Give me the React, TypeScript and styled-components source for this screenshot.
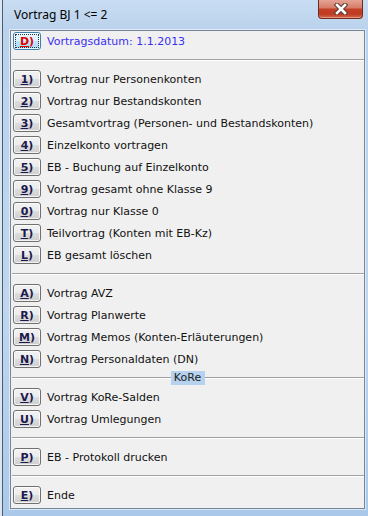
import { createGlobalStyle, styled } from "styled-components";

const GlobalStyle = createGlobalStyle`
  html, body {
    margin: 0;
    padding: 0;
  }
  body {
    width: 368px;
    height: 516px;
    overflow: hidden;
    background: #dbe6f1;
    font-family: "DejaVu Sans", Verdana, sans-serif;
  }
`;

const Window = styled.div`
  box-sizing: border-box;
  width: 366px;
  height: 516px;
  margin-left: 2px;
  padding: 0 3px 7px 7px;
  display: flex;
  flex-direction: column;
  border-left: 1px solid #4a5d73;
  background: linear-gradient(
    to bottom,
    #c9ddf2 0px,
    #bad2ec 30px,
    #bfd6ee 60%,
    #aac9ea 100%
  );
`;

const TitleBar = styled.div`
  height: 30px;
  display: flex;
  justify-content: space-between;
  align-items: flex-start;
`;

const Title = styled.div`
  margin-left: 4px;
  line-height: 30px;
  font-family: "Noto Sans", "Open Sans", sans-serif;
  font-size: 12px;
  color: #000;
`;

const CloseButton = styled.div`
  box-sizing: border-box;
  width: 45px;
  height: 19px;
  margin-right: 2px;
  display: flex;
  align-items: center;
  justify-content: center;
  border: 1px solid #6b2d20;
  border-top: none;
  border-radius: 0 0 4px 4px;
  background: linear-gradient(
    to bottom,
    #e5a393 0%,
    #d67f6b 42%,
    #c43f26 52%,
    #bf3b20 78%,
    #d46a4e 100%
  );
  box-shadow: inset 0 -1px 0 rgba(255, 200, 180, 0.5);
`;

const Client = styled.div`
  flex: 1;
  display: flex;
  flex-direction: column;
  padding: 1px 0 4px 2px;
  background: #f0f0f0;
  border: 1px solid #76869a;
  box-shadow: 0 0 0 1px rgba(255, 255, 255, 0.55);
`;

const Group = styled.div`
  display: flex;
  flex-direction: column;
  gap: 4px;
`;

const Row = styled.div`
  height: 18px;
  display: flex;
  align-items: center;
  gap: 6px;
`;

const KeyButton = styled.div<{ $focus?: boolean }>`
  position: relative;
  box-sizing: border-box;
  width: 28px;
  height: 18px;
  flex: none;
  display: flex;
  align-items: center;
  justify-content: center;
  border: 1px solid ${({ $focus }) => ($focus ? "#3c7fb1" : "#707070")};
  border-radius: 3px;
  background: ${({ $focus }) =>
    $focus
      ? "linear-gradient(to bottom, #eaf6fd 0%, #d9f0fc 50%, #bee6fd 51%, #a7d9f5 100%)"
      : "linear-gradient(to bottom, #f2f2f2 0%, #ebebeb 50%, #dddddd 51%, #cfcfcf 100%)"};
  box-shadow: inset 0 0 0 1px rgba(255, 255, 255, 0.75);
  font-size: 11px;
  font-weight: bold;
  color: ${({ $focus }) => ($focus ? "#e00000" : "#1a1a4e")};

  &::after {
    content: "";
    display: ${({ $focus }) => ($focus ? "block" : "none")};
    position: absolute;
    inset: 1px;
    border: 1px dotted #333;
    border-radius: 1px;
  }
`;

const Hotkey = styled.span`
  text-decoration: underline;
  text-underline-offset: 1px;
`;

const Label = styled.span<{ $accent?: boolean }>`
  font-size: 11px;
  white-space: nowrap;
  color: ${({ $accent }) => ($accent ? "#3a2ff0" : "#111")};
`;

const Separator = styled.div`
  height: 20px;
  margin-left: -1px;
  display: flex;
  align-items: center;
`;

const Line = styled.div`
  flex: 1;
  height: 0;
  border-top: 1px solid #a0a0a0;
  border-bottom: 1px solid #ffffff;
`;

const SectionTitle = styled.span`
  height: 14px;
  padding: 0 4px 0 3px;
  line-height: 14px;
  font-size: 11px;
  color: #222;
  background: #b7d2ee;
`;

type Item = { key: string; text: string; focus?: boolean };
type Section = { title?: string; items: Item[] };

const sections: Section[] = [
  { items: [{ key: "D", text: "Vortragsdatum: 1.1.2013", focus: true }] },
  {
    items: [
      { key: "1", text: "Vortrag nur Personenkonten" },
      { key: "2", text: "Vortrag nur Bestandskonten" },
      { key: "3", text: "Gesamtvortrag (Personen- und Bestandskonten)" },
      { key: "4", text: "Einzelkonto vortragen" },
      { key: "5", text: "EB - Buchung auf Einzelkonto" },
      { key: "9", text: "Vortrag gesamt ohne Klasse 9" },
      { key: "0", text: "Vortrag nur Klasse 0" },
      { key: "T", text: "Teilvortrag (Konten mit EB-Kz)" },
      { key: "L", text: "EB gesamt löschen" },
    ],
  },
  {
    items: [
      { key: "A", text: "Vortrag AVZ" },
      { key: "R", text: "Vortrag Planwerte" },
      { key: "M", text: "Vortrag Memos (Konten-Erläuterungen)" },
      { key: "N", text: "Vortrag Personaldaten (DN)" },
    ],
  },
  {
    title: "KoRe",
    items: [
      { key: "V", text: "Vortrag KoRe-Salden" },
      { key: "U", text: "Vortrag Umlegungen" },
    ],
  },
  { items: [{ key: "P", text: "EB - Protokoll drucken" }] },
  { items: [{ key: "E", text: "Ende" }] },
];

const CloseIcon = () => (
  <svg width="14" height="12" viewBox="0 0 14 12">
    <path
      d="M3 2 L11 10 M11 2 L3 10"
      stroke="#5b3a33"
      strokeWidth="4.6"
      strokeLinecap="square"
      fill="none"
    />
    <path
      d="M3 2 L11 10 M11 2 L3 10"
      stroke="#ffffff"
      strokeWidth="2.6"
      strokeLinecap="square"
      fill="none"
    />
  </svg>
);

export default function App() {
  return (
    <>
      <GlobalStyle />
      <Window>
        <TitleBar>
          <Title>Vortrag BJ 1 &lt;= 2</Title>
          <CloseButton>
            <CloseIcon />
          </CloseButton>
        </TitleBar>
        <Client>
          {sections.map((section, i) => (
            <div key={i}>
              {i > 0 && (
                <Separator>
                  <Line />
                  {section.title && <SectionTitle>{section.title}</SectionTitle>}
                  {section.title && <Line />}
                </Separator>
              )}
              <Group>
                {section.items.map((item) => (
                  <Row key={item.key}>
                    <KeyButton $focus={item.focus}>
                      <Hotkey>{item.key}</Hotkey>)
                    </KeyButton>
                    <Label $accent={item.focus}>{item.text}</Label>
                  </Row>
                ))}
              </Group>
            </div>
          ))}
        </Client>
      </Window>
    </>
  );
}
